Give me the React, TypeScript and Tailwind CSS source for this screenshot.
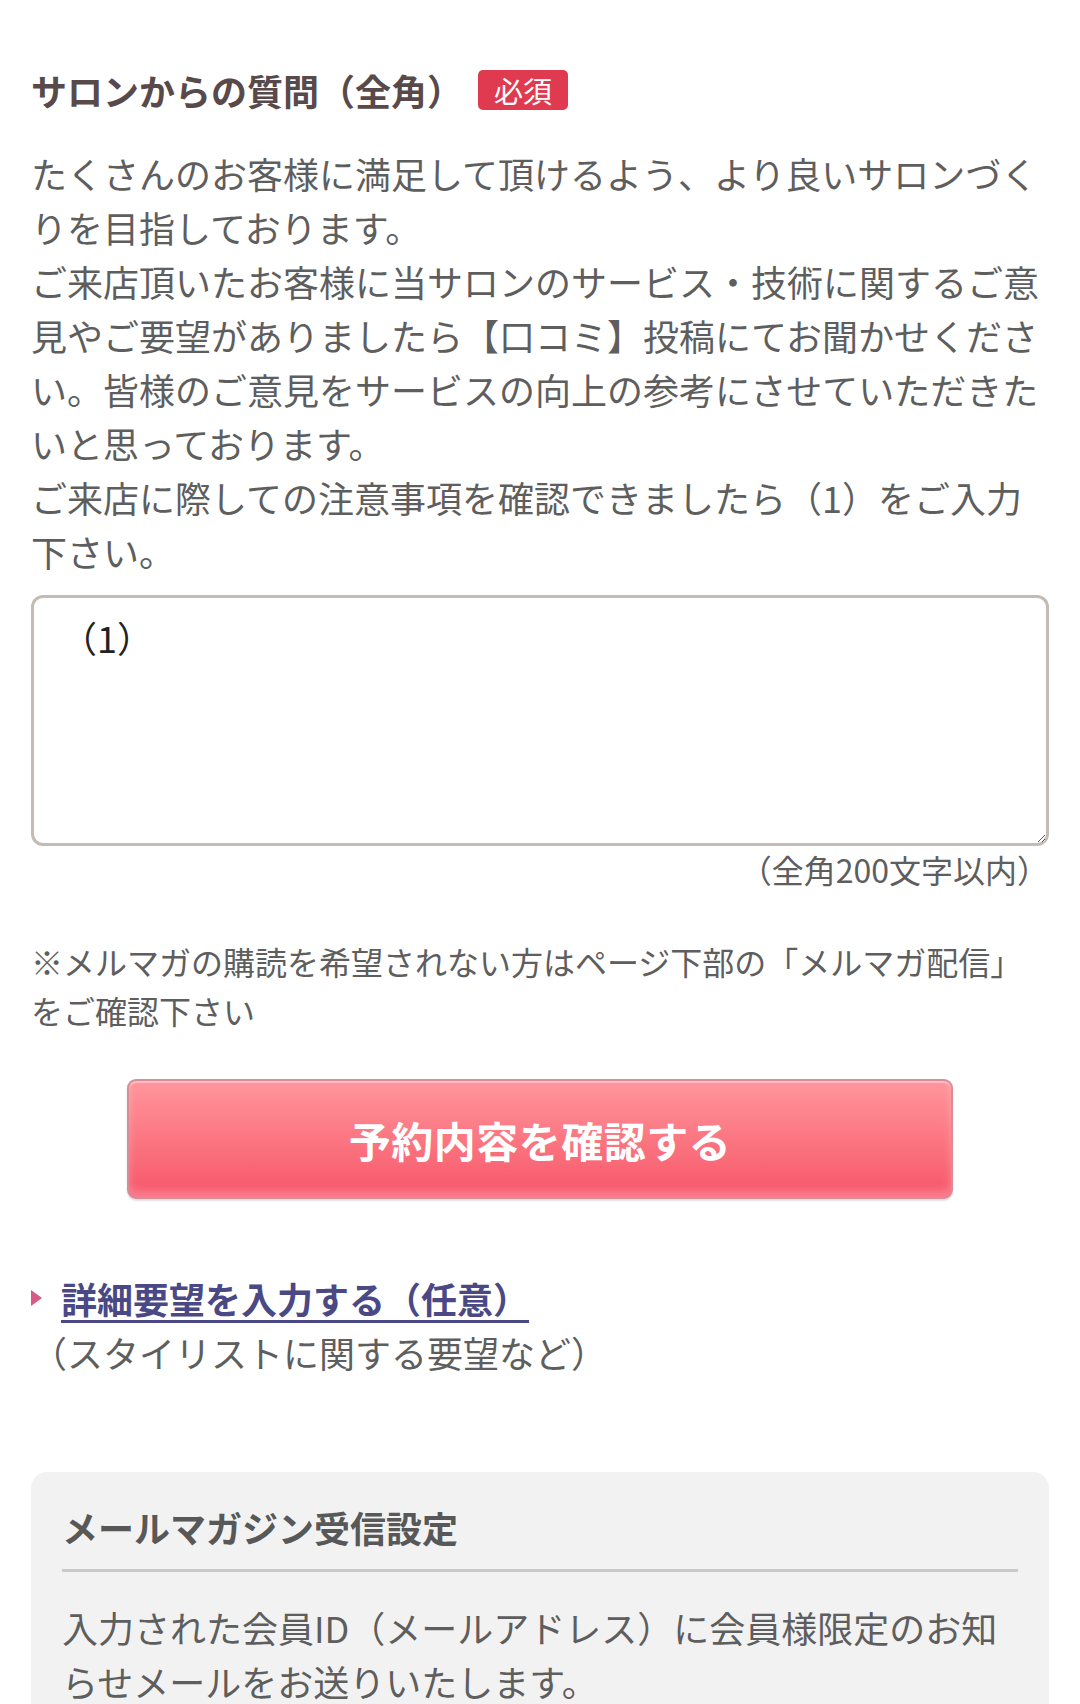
import React from "react";

const font = "font-['Noto_Sans_CJK_JP','Noto_Sans',sans-serif]";

export default function App() {
  return (
    <div className={`${font} bg-white min-h-[1704px] px-[31px] pt-[64px] text-[#5e5e5e]`}>
      {/* question heading */}
      <div className="flex items-center gap-[15px] h-[52px]">
        <h2 className="text-[36px] font-bold text-[#584a4a] leading-none">サロンからの質問（全角）</h2>
        <span className="bg-[#e03a50] text-white text-[29px] leading-none rounded-[5px] w-[90px] h-[40px] flex items-center justify-center">
          必須
        </span>
      </div>

      <p className="mt-[30px] text-[36px] leading-[54px]">
        たくさんのお客様に満足して頂けるよう、より良いサロンづくりを目指しております。
        <br />
        ご来店頂いたお客様に当サロンのサービス・技術に関するご意見やご要望がありましたら【口コミ】投稿にてお聞かせください。皆様のご意見をサービスの向上の参考にさせていただきたいと思っております。
        <br />
        ご来店に際しての注意事項を確認できましたら（1）をご入力下さい。
      </p>

      <textarea
        defaultValue="（1）"
        className="mt-[17px] block w-full h-[251px] border-[3px] border-[#c2bcb4] rounded-[12px] px-[27px] py-[12px] text-[36px] leading-[54px] text-[#222] resize-y outline-none"
      />
      <p className="text-right text-[32px] leading-[44px] mt-[1px]">（全角200文字以内）</p>

      <p className="mt-[46px] text-[32px] leading-[49px]">
        ※メルマガの購読を希望されない方はページ下部の「メルマガ配信」をご確認下さい
      </p>

      {/* confirm button */}
      <div className="mt-[44px] flex justify-center">
        <button className="w-[826px] h-[120px] rounded-[9px] border-2 border-[#d98d98] bg-gradient-to-b from-[#ff959d] via-[#fb7681] to-[#f7556a] shadow-[inset_0_2px_0_rgba(255,255,255,0.35),inset_0_-6px_8px_rgba(255,255,255,0.25),0_2px_2px_rgba(0,0,0,0.12)] text-white text-[42px] font-bold tracking-[0.5px]">
          予約内容を確認する
        </button>
      </div>

      {/* optional link */}
      <div className="mt-[72px] flex items-center">
        <svg width="11" height="16" viewBox="0 0 11 16" className="shrink-0">
          <path d="M0 0 L11 8 L0 16 Z" fill="#d65a85" />
        </svg>
        <a href="#" className="ml-[19px] text-[36px] leading-[54px] font-bold text-[#4a4985] underline decoration-[3px] underline-offset-[6px]">
          詳細要望を入力する（任意）
        </a>
      </div>
      <p className="text-[36px] leading-[54px]">（スタイリストに関する要望など）</p>

      {/* mail magazine box */}
      <div className="mt-[93px] bg-[#f2f2f2] rounded-[16px] px-[31px] pt-[28px] pb-[40px]">
        <h3 className="text-[36px] font-bold text-[#585858] leading-[54px]">メールマガジン受信設定</h3>
        <div className="mt-[15px] h-[3px] bg-[#c9c9c9]" />
        <p className="mt-[28px] text-[36px] leading-[54px]">
          入力された会員ID（メールアドレス）に会員様限定のお知らせメールをお送りいたします。
        </p>
      </div>
    </div>
  );
}
